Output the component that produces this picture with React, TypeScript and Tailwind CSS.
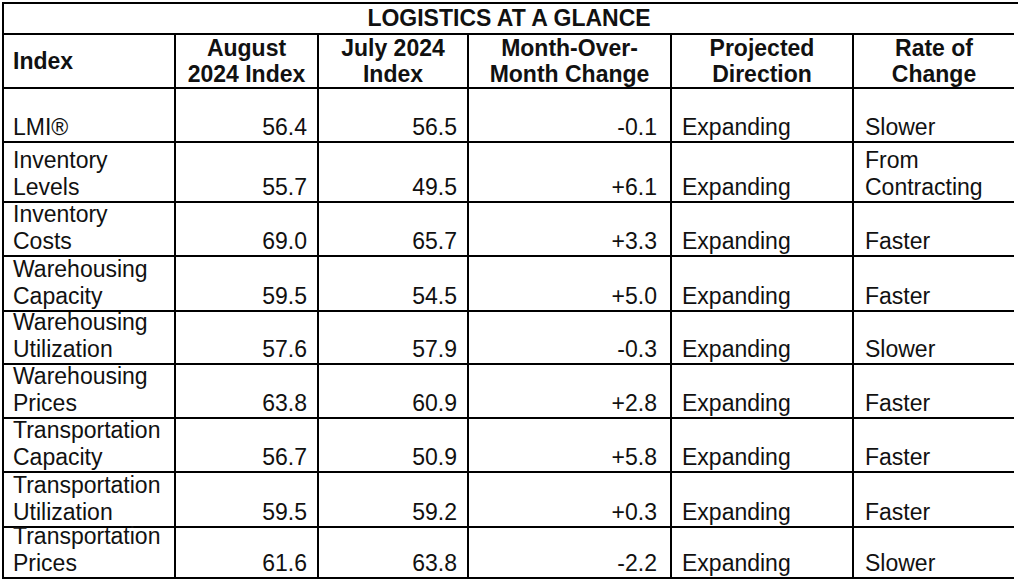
import React from 'react';

type Row = {
  name: string[];
  aug: string;
  jul: string;
  change: string;
  direction: string;
  rate: string[];
  height: string;
};

const rows: Row[] = [
  { name: ['LMI®'], aug: '56.4', jul: '56.5', change: '-0.1', direction: 'Expanding', rate: ['Slower'], height: 'h-[54px]' },
  { name: ['Inventory', 'Levels'], aug: '55.7', jul: '49.5', change: '+6.1', direction: 'Expanding', rate: ['From', 'Contracting'], height: 'h-[60px]' },
  { name: ['Inventory', 'Costs'], aug: '69.0', jul: '65.7', change: '+3.3', direction: 'Expanding', rate: ['Faster'], height: 'h-[54px]' },
  { name: ['Warehousing', 'Capacity'], aug: '59.5', jul: '54.5', change: '+5.0', direction: 'Expanding', rate: ['Faster'], height: 'h-[55px]' },
  { name: ['Warehousing', 'Utilization'], aug: '57.6', jul: '57.9', change: '-0.3', direction: 'Expanding', rate: ['Slower'], height: 'h-[53px]' },
  { name: ['Warehousing', 'Prices'], aug: '63.8', jul: '60.9', change: '+2.8', direction: 'Expanding', rate: ['Faster'], height: 'h-[54px]' },
  { name: ['Transportation', 'Capacity'], aug: '56.7', jul: '50.9', change: '+5.8', direction: 'Expanding', rate: ['Faster'], height: 'h-[54px]' },
  { name: ['Transportation', 'Utilization'], aug: '59.5', jul: '59.2', change: '+0.3', direction: 'Expanding', rate: ['Faster'], height: 'h-[55px]' },
  { name: ['Transportation', 'Prices'], aug: '61.6', jul: '63.8', change: '-2.2', direction: 'Expanding', rate: ['Slower'], height: 'h-[51px]' },
];

const cell = 'border-l-2 border-b-2 border-black flex flex-col justify-end leading-[27px] whitespace-nowrap';

const Lines: React.FC<{ lines: string[] }> = ({ lines }) => (
  <>
    {lines.map((l) => (
      <span key={l}>{l}</span>
    ))}
  </>
);

const HeaderCell: React.FC<{ lines: string[]; left?: boolean }> = ({ lines, left }) => (
  <div
    className={`h-[54px] border-l-2 border-b-2 border-black flex flex-col justify-center font-bold leading-[26px] whitespace-nowrap ${
      left ? 'items-start pl-[9px]' : 'items-center'
    }`}
  >
    <Lines lines={lines} />
  </div>
);

const App: React.FC = () => {
  return (
    <div className="w-[1018px] h-[580px] bg-white overflow-hidden pt-[2px] pl-[2px] text-[#111]">
      <div
        className="grid grid-cols-[172px_143px_150px_203px_182px_162px] border-t-2 border-black text-[23px]"
        style={{ fontFamily: '"Liberation Sans", Arial, sans-serif' }}
      >
        <div className="col-span-6 h-[31px] border-l-2 border-b-2 border-black flex items-center justify-center font-bold leading-none">
          LOGISTICS AT A GLANCE
        </div>

        <HeaderCell lines={['Index']} left />
        <HeaderCell lines={['August', '2024 Index']} />
        <HeaderCell lines={['July 2024', 'Index']} />
        <HeaderCell lines={['Month-Over-', 'Month Change']} />
        <HeaderCell lines={['Projected', 'Direction']} />
        <HeaderCell lines={['Rate of', 'Change']} />

        {rows.map((r) => (
          <React.Fragment key={r.name.join(' ')}>
            <div className={`${cell} ${r.height} items-start pl-[9px]`}>
              <Lines lines={r.name} />
            </div>
            <div className={`${cell} ${r.height} items-end pr-[10px]`}>{r.aug}</div>
            <div className={`${cell} ${r.height} items-end pr-[10px]`}>{r.jul}</div>
            <div className={`${cell} ${r.height} items-end pr-[13px]`}>{r.change}</div>
            <div className={`${cell} ${r.height} items-start pl-[10px]`}>{r.direction}</div>
            <div className={`${cell} ${r.height} items-start pl-[11px]`}>
              <Lines lines={r.rate} />
            </div>
          </React.Fragment>
        ))}
      </div>
    </div>
  );
};

export default App;
